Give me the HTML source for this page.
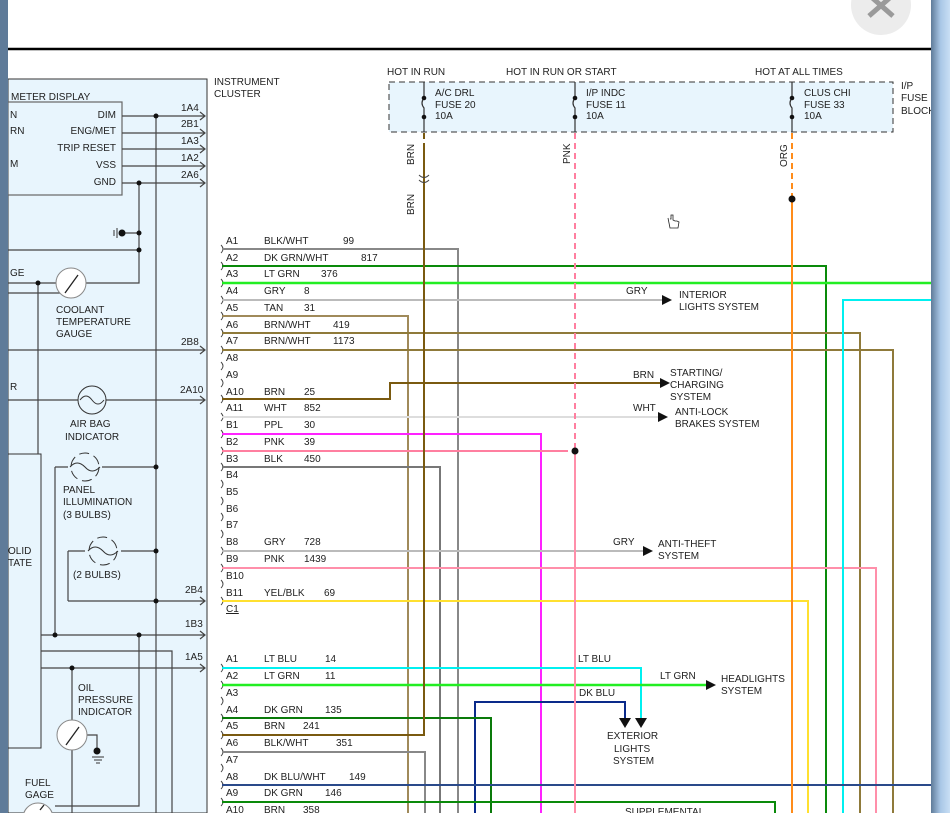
<!DOCTYPE html>
<html><head><meta charset="utf-8"><style>
html,body{margin:0;padding:0;background:#fff;width:950px;height:813px;overflow:hidden}
svg{display:block}
text{font-family:"Liberation Sans",sans-serif;font-size:10px;fill:#222}
</style></head><body>
<svg width="950" height="813" viewBox="0 0 950 813">
<defs>
<linearGradient id="rb" x1="0" x2="1"><stop offset="0" stop-color="#5f7b99"/><stop offset="0.5" stop-color="#a9c7e6"/><stop offset="1" stop-color="#c9dff5"/></linearGradient>
</defs>
<!-- top -->
<rect x="0" y="0" width="950" height="813" fill="#fff"/>
<circle cx="881" cy="5" r="30" fill="#ececec"/>
<path d="M869 -5 L893 16 M893 -5 L869 16" stroke="#9a9a9a" stroke-width="5"/>
<line x1="8" y1="49" x2="931" y2="49" stroke="#000" stroke-width="2.5"/>

<!-- left panel -->
<rect x="8" y="79" width="199" height="734" fill="#e8f5fd" stroke="#333" stroke-width="1"/>
<rect x="8" y="102" width="114" height="93" fill="#e8f5fd" stroke="#666" stroke-width="1.2"/>
<rect x="8" y="454" width="33" height="294" fill="#e8f5fd" stroke="#333" stroke-width="1"/>
<text x="11" y="100">METER DISPLAY</text>
<text x="10" y="118">N</text><text x="10" y="134">RN</text><text x="10" y="167">M</text>
<text x="116" y="118" text-anchor="end">DIM</text>
<text x="116" y="134" text-anchor="end">ENG/MET</text>
<text x="116" y="151" text-anchor="end">TRIP RESET</text>
<text x="116" y="168" text-anchor="end">VSS</text>
<text x="116" y="185" text-anchor="end">GND</text>
<g stroke="#444" stroke-width="1.2" fill="none">
<path d="M122 116H205M122 133H205M122 149H205M122 166H205M122 183H205"/>
<path d="M200 112l5 4l-5 4M200 129l5 4l-5 4M200 145l5 4l-5 4M200 162l5 4l-5 4M200 179l5 4l-5 4"/>
<path d="M156 116V813M139 183V283H86M139 233H122M8 250H139M8 283H56M8 293H60M38 283V454"/>
<path d="M8 350H205M200 346l5 4l-5 4M8 400H78M106 400H205M200 396l5 4l-5 4"/>
<path d="M55 467H68M102 467H156M55 467V635M68 551V601M68 551H85M121 551H156M68 601H205M200 597l5 4l-5 4"/>
<path d="M41 635H205M200 631l5 4l-5 4M41 651H172V813M41 668H205M200 664l5 4l-5 4M72 668V720M72 750V813M139 635V806H55M87 735H97V748"/>
</g>
<g fill="#111"><circle cx="156" cy="116" r="2.5"/><circle cx="139" cy="183" r="2.5"/><circle cx="139" cy="233" r="2.5"/><circle cx="139" cy="250" r="2.5"/><circle cx="38" cy="283" r="2.5"/><circle cx="156" cy="467" r="2.5"/><circle cx="156" cy="551" r="2.5"/><circle cx="156" cy="601" r="2.5"/><circle cx="55" cy="635" r="2.5"/><circle cx="139" cy="635" r="2.5"/><circle cx="72" cy="668" r="2.5"/><circle cx="122" cy="233" r="3.5"/><circle cx="97" cy="751" r="3.5"/></g>
<path d="M117 228v10M114 230v6M92 757h12M94 760h8M96 763h4" stroke="#333"/>
<text x="181" y="111">1A4</text><text x="181" y="127">2B1</text><text x="181" y="144">1A3</text><text x="181" y="161">1A2</text><text x="181" y="178">2A6</text>
<text x="181" y="345">2B8</text><text x="180" y="393">2A10</text><text x="185" y="593">2B4</text><text x="185" y="627">1B3</text><text x="185" y="660">1A5</text>
<circle cx="71" cy="283" r="15" fill="#fff" stroke="#888"/><path d="M65 293L78 275" stroke="#222" stroke-width="1.3"/>
<circle cx="72" cy="735" r="15" fill="#fff" stroke="#888"/><path d="M66 745L79 727" stroke="#222" stroke-width="1.3"/>
<circle cx="38" cy="818" r="15" fill="#fff" stroke="#888"/><path d="M40 810l4 -5" stroke="#222" stroke-width="1.3"/>
<g fill="none" stroke="#333"><circle cx="92" cy="400" r="14"/><path d="M80 400q6-8 12 0q6 8 12 0"/>
<circle cx="85" cy="467" r="14" stroke-dasharray="10 5"/><path d="M70 467q7-8 15 0q7 8 15 0"/>
<circle cx="103" cy="551" r="14" stroke-dasharray="10 5"/><path d="M88 551q7-8 15 0q7 8 15 0"/></g>
<text x="10" y="276">GE</text><text x="10" y="390">R</text><text x="8" y="554">OLID</text><text x="8" y="566">TATE</text>
<text x="56" y="313">COOLANT</text><text x="56" y="325">TEMPERATURE</text><text x="56" y="337">GAUGE</text>
<text x="70" y="427">AIR BAG</text><text x="65" y="440">INDICATOR</text>
<text x="63" y="493">PANEL</text><text x="63" y="505">ILLUMINATION</text><text x="63" y="518">(3 BULBS)</text>
<text x="73" y="578">(2 BULBS)</text>
<text x="78" y="691">OIL</text><text x="78" y="703">PRESSURE</text><text x="78" y="715">INDICATOR</text>
<text x="25" y="786">FUEL</text><text x="25" y="798">GAGE</text>
<text x="214" y="85">INSTRUMENT</text><text x="214" y="97">CLUSTER</text>

<!-- fuse block -->
<rect x="389" y="82" width="504" height="50" fill="#e8f5fd" stroke="#333" stroke-dasharray="6 4"/>
<text x="387" y="75">HOT IN RUN</text><text x="506" y="75">HOT IN RUN OR START</text><text x="755" y="75">HOT AT ALL TIMES</text>
<text x="901" y="89">I/P</text><text x="901" y="101">FUSE</text><text x="901" y="114">BLOCK</text>
<text x="435" y="96">A/C DRL</text><text x="435" y="108">FUSE 20</text><text x="435" y="119">10A</text>
<text x="586" y="96">I/P INDC</text><text x="586" y="108">FUSE 11</text><text x="586" y="119">10A</text>
<text x="804" y="96">CLUS CHI</text><text x="804" y="108">FUSE 33</text><text x="804" y="119">10A</text>
<g stroke="#333" stroke-width="1.2" fill="none"><path d="M424 82V98q-4 5 0 10V132M575 82V98q-4 5 0 10V132M792 82V98q-4 5 0 10V132"/></g>
<g fill="#111"><circle cx="424" cy="98" r="2.3"/><circle cx="424" cy="117" r="2.3"/><circle cx="575" cy="98" r="2.3"/><circle cx="575" cy="117" r="2.3"/><circle cx="792" cy="98" r="2.3"/><circle cx="792" cy="117" r="2.3"/></g>

<!-- connector labels -->
<g>
<text x="226" y="244">A1</text><text x="264" y="244">BLK/WHT</text><text x="343" y="244">99</text>
<text x="226" y="261">A2</text><text x="264" y="261">DK GRN/WHT</text><text x="361" y="261">817</text>
<text x="226" y="277">A3</text><text x="264" y="277">LT GRN</text><text x="321" y="277">376</text>
<text x="226" y="294">A4</text><text x="264" y="294">GRY</text><text x="304" y="294">8</text>
<text x="226" y="311">A5</text><text x="264" y="311">TAN</text><text x="304" y="311">31</text>
<text x="226" y="328">A6</text><text x="264" y="328">BRN/WHT</text><text x="333" y="328">419</text>
<text x="226" y="344">A7</text><text x="264" y="344">BRN/WHT</text><text x="333" y="344">1173</text>
<text x="226" y="361">A8</text><text x="226" y="378">A9</text>
<text x="226" y="395">A10</text><text x="264" y="395">BRN</text><text x="304" y="395">25</text>
<text x="226" y="411">A11</text><text x="264" y="411">WHT</text><text x="304" y="411">852</text>
<text x="226" y="428">B1</text><text x="264" y="428">PPL</text><text x="304" y="428">30</text>
<text x="226" y="445">B2</text><text x="264" y="445">PNK</text><text x="304" y="445">39</text>
<text x="226" y="462">B3</text><text x="264" y="462">BLK</text><text x="304" y="462">450</text>
<text x="226" y="478">B4</text><text x="226" y="495">B5</text><text x="226" y="512">B6</text><text x="226" y="528">B7</text>
<text x="226" y="545">B8</text><text x="264" y="545">GRY</text><text x="304" y="545">728</text>
<text x="226" y="562">B9</text><text x="264" y="562">PNK</text><text x="304" y="562">1439</text>
<text x="226" y="579">B10</text>
<text x="226" y="596">B11</text><text x="264" y="596">YEL/BLK</text><text x="324" y="596">69</text>
<text x="226" y="612" text-decoration="underline">C1</text>
<text x="226" y="662">A1</text><text x="264" y="662">LT BLU</text><text x="325" y="662">14</text>
<text x="226" y="679">A2</text><text x="264" y="679">LT GRN</text><text x="325" y="679">11</text>
<text x="226" y="696">A3</text>
<text x="226" y="713">A4</text><text x="264" y="713">DK GRN</text><text x="325" y="713">135</text>
<text x="226" y="729">A5</text><text x="264" y="729">BRN</text><text x="303" y="729">241</text>
<text x="226" y="746">A6</text><text x="264" y="746">BLK/WHT</text><text x="336" y="746">351</text>
<text x="226" y="763">A7</text>
<text x="226" y="780">A8</text><text x="264" y="780">DK BLU/WHT</text><text x="349" y="780">149</text>
<text x="226" y="796">A9</text><text x="264" y="796">DK GRN</text><text x="325" y="796">146</text>
<text x="226" y="813">A10</text><text x="264" y="813">BRN</text><text x="303" y="813">358</text>
</g>
<g fill="none" stroke="#444" stroke-width="0.9">
<path d="M221 245q4 4 0 8M221 262q4 4 0 8M221 279q4 4 0 8M221 296q4 4 0 8M221 312q4 4 0 8M221 329q4 4 0 8M221 346q4 4 0 8M221 362q4 4 0 8M221 379q4 4 0 8M221 395q4 4 0 8M221 413q4 4 0 8M221 430q4 4 0 8M221 447q4 4 0 8M221 463q4 4 0 8M221 480q4 4 0 8M221 497q4 4 0 8M221 513q4 4 0 8M221 530q4 4 0 8M221 547q4 4 0 8M221 564q4 4 0 8M221 580q4 4 0 8M221 597q4 4 0 8"/>
<path d="M221 664q4 4 0 8M221 681q4 4 0 8M221 697q4 4 0 8M221 714q4 4 0 8M221 731q4 4 0 8M221 748q4 4 0 8M221 764q4 4 0 8M221 781q4 4 0 8M221 798q4 4 0 8"/>
</g>

<!-- wires -->
<g fill="none" stroke-width="2">
<path d="M222 249H458V813" stroke="#888"/>
<path d="M222 266H826V813" stroke="#0a8a0a"/>
<path d="M222 283H931" stroke="#22ee22" stroke-width="2.5"/>
<path d="M222 300H662" stroke="#bbb"/>
<path d="M222 316H408V813" stroke="#a08a5a"/>
<path d="M222 333H860V813" stroke="#8f7a3a"/>
<path d="M222 350H893V813" stroke="#8f7a3a"/>
<path d="M222 399H390V383H660" stroke="#7a5a10"/>
<path d="M222 417H658" stroke="#ddd"/>
<path d="M222 434H541V813" stroke="#ff22ff"/>
<path d="M222 451H568" stroke="#ff7fa0"/>
<path d="M222 467H440V813" stroke="#777"/>
<path d="M222 551H646" stroke="#bbb"/>
<path d="M222 568H876V813" stroke="#ff8faa"/>
<path d="M222 601H808V813" stroke="#ffe030"/>
<path d="M843 813V300H931" stroke="#00f0f0"/>
<path d="M222 668H641V718" stroke="#00f0f0"/>
<path d="M222 685H706" stroke="#22ee22" stroke-width="2.5"/>
<path d="M475 813V702H625V718" stroke="#0a2a8a"/>
<path d="M222 718H491V813" stroke="#0a7a0a"/>
<path d="M222 735H424V145" stroke="#7a5a10"/>
<path d="M222 752H425V813" stroke="#888"/>
<path d="M222 785H931" stroke="#2a4a8a"/>
<path d="M222 802H775V813" stroke="#0a8a0a"/>
<path d="M575 133V450" stroke="#ff7fa0" stroke-dasharray="6 4"/>
<path d="M575 450V813" stroke="#ff8faa"/>
<path d="M792 133V199" stroke="#ff8c1a" stroke-dasharray="6 4"/>
<path d="M792 199V813" stroke="#ff8c1a"/>
<path d="M424 133V175" stroke="#7a5a10" stroke-dasharray="6 4"/>
</g>
<path d="M419 175q5 5 10 0M419 180q5 5 10 0" stroke="#444" fill="none"/>
<circle cx="575" cy="451" r="3.5" fill="#111"/><circle cx="792" cy="199" r="3.5" fill="#111"/>
<g fill="#111"><path d="M662 295l10 5l-10 5z"/><path d="M660 378l10 5l-10 5z"/><path d="M658 412l10 5l-10 5z"/><path d="M643 546l10 5l-10 5z"/><path d="M706 680l10 5l-10 5z"/><path d="M619 718l6 10l6 -10z"/><path d="M635 718l6 10l6 -10z"/></g>
<text x="414" y="165" transform="rotate(-90 414 165)">BRN</text>
<text x="414" y="215" transform="rotate(-90 414 215)">BRN</text>
<text x="570" y="164" transform="rotate(-90 570 164)">PNK</text>
<text x="787" y="167" transform="rotate(-90 787 167)">ORG</text>
<text x="626" y="294">GRY</text><text x="679" y="298">INTERIOR</text><text x="679" y="310">LIGHTS SYSTEM</text>
<text x="633" y="378">BRN</text><text x="670" y="376">STARTING/</text><text x="670" y="388">CHARGING</text><text x="670" y="400">SYSTEM</text>
<text x="633" y="411">WHT</text><text x="675" y="415">ANTI-LOCK</text><text x="675" y="427">BRAKES SYSTEM</text>
<text x="613" y="545">GRY</text><text x="658" y="547">ANTI-THEFT</text><text x="658" y="559">SYSTEM</text>
<text x="578" y="662">LT BLU</text><text x="660" y="679">LT GRN</text><text x="721" y="682">HEADLIGHTS</text><text x="721" y="694">SYSTEM</text>
<text x="579" y="696">DK BLU</text><text x="607" y="739">EXTERIOR</text><text x="614" y="752">LIGHTS</text><text x="613" y="764">SYSTEM</text>
<text x="625" y="815">SUPPLEMENTAL</text>
<path d="M668 218l2 10h8l1-6l-2-1l-2 0l-2-1v-5l-2 0v4l-1 0" fill="#fff" stroke="#222" stroke-width="0.8"/>

<!-- side bars -->
<rect x="0" y="0" width="8" height="813" fill="#5f7b99"/>
<rect x="931" y="0" width="19" height="813" fill="url(#rb)"/>
</svg>
</body></html>
